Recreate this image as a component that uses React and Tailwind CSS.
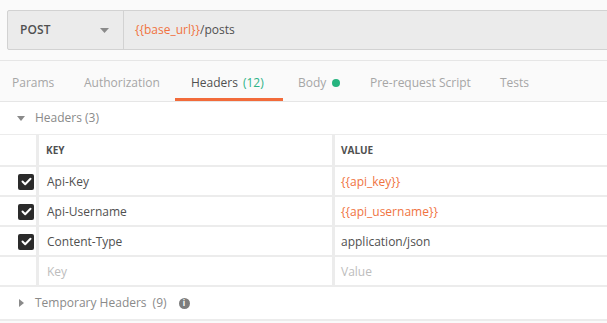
import React from "react";

const Check = () => (
  <div className="w-[16px] h-[16px] rounded-[2px] bg-[#2b2b2b] flex items-center justify-center">
    <svg width="11" height="9" viewBox="0 0 11 9" fill="none">
      <path d="M1.5 4.5 L4.2 7.2 L9.5 1.8" stroke="white" strokeWidth="2" strokeLinecap="round" strokeLinejoin="round" />
    </svg>
  </div>
);

const Row = ({ checked, k, v, kClass = "text-[#505050]", vClass = "text-[#505050]" }) => (
  <div className="flex h-[30px] border-b-2 border-[#ececec]">
    <div className="w-[36px] flex items-center justify-end pr-[2px] pt-[1px]">{checked && <Check />}</div>
    <div className={`w-[296px] border-l-[3px] border-[#ececec] flex items-center pl-[8px] pt-[1px] text-[12px] ${kClass}`}>{k}</div>
    <div className={`flex-1 border-l-[3px] border-[#ececec] flex items-center pl-[6px] pt-[1px] text-[12px] ${vClass}`}>{v}</div>
  </div>
);

export default function App() {
  return (
    <div className="w-[607px] h-[323px] overflow-hidden bg-[#fafafa]" style={{ fontFamily: "'Open Sans', sans-serif" }}>
      <div className="pt-[10px] pl-[7px]">
        <div className="flex h-[40px] w-[610px] border border-[#d2d2d2] bg-[#ebebeb] rounded-l-[2px]">
          <div className="w-[116px] flex items-center justify-between pl-[12px] pr-[14px] border-r border-[#d2d2d2]">
            <span className="text-[12px] font-semibold text-[#505050] tracking-[0.1px]">POST</span>
            <svg width="9" height="5" viewBox="0 0 9 5"><path d="M0 0 L9 0 L4.5 5 Z" fill="#8a8a8a" /></svg>
          </div>
          <div className="flex items-center pl-[11px] text-[12px]">
            <span className="text-[#f0733f]">{"{{base_url}}"}</span>
            <span className="text-[#505050]">/posts</span>
          </div>
        </div>
      </div>
      <div className="mt-[10px] border-t border-[#e6e6e6] border-b border-b-[#e6e6e6] flex h-[42px] text-[12px] text-[#a6a6a6]">
        <div className="w-[72px] pl-[12px] pt-[3px] flex items-center">Params</div>
        <div className="w-[103px] pl-[12px] pt-[3px] flex items-center">Authorization</div>
        <div className="w-[108px] pl-[16px] flex items-center border-b-[3px] border-[#f26b3a] pt-[6px] text-[#505050]">
          Headers <span className="ml-[5px] text-[#2eb387]">(12)</span>
        </div>
        <div className="w-[75px] pl-[15px] pt-[3px] flex items-center">
          Body <span className="ml-[6px] w-[8px] h-[8px] rounded-full bg-[#26b47f]"></span>
        </div>
        <div className="w-[130px] pl-[12px] pt-[3px] flex items-center">Pre-request Script</div>
        <div className="pl-[12px] pt-[3px] flex items-center">Tests</div>
      </div>
      <div className="bg-white">
        <div className="flex items-center h-[33px] border-b border-[#ececec] text-[12px] font-medium text-[#8a8a8a]">
          <svg className="ml-[17px] mr-[10px]" width="8" height="5" viewBox="0 0 8 5"><path d="M0 0 L8 0 L4 5 Z" fill="#8a8a8a" /></svg>
          <span>Headers (3)</span>
        </div>
        <div className="flex h-[32px] border-b-2 border-[#ececec]">
          <div className="w-[36px]"></div>
          <div className="w-[296px] border-l-[3px] border-[#ececec] flex items-center pl-[7px] text-[10px] font-bold text-[#505050]">KEY</div>
          <div className="flex-1 border-l-[3px] border-[#ececec] flex items-center pl-[6px] text-[10px] font-bold text-[#505050]">VALUE</div>
        </div>
        <Row checked k="Api-Key" v="{{api_key}}" vClass="text-[#f0733f]" />
        <Row checked k="Api-Username" v="{{api_username}}" vClass="text-[#f0733f]" />
        <Row checked k="Content-Type" v="application/json" />
        <Row k="Key" v="Value" kClass="text-[#bdbdbd]" vClass="text-[#bdbdbd]" />
        <div className="flex items-center h-[34px] border-b-2 border-[#ececec] text-[12px] font-medium text-[#8a8a8a]">
          <svg className="ml-[19px] mr-[11px]" width="5" height="8" viewBox="0 0 5 8"><path d="M0 0 L5 4 L0 8 Z" fill="#8a8a8a" /></svg>
          <span>Temporary Headers</span>
          <span className="ml-[6px]">(9)</span>
          <span className="ml-[12px] w-[11px] h-[11px] rounded-full bg-[#7d7d7d] flex items-center justify-center text-white text-[8px] font-bold leading-none">i</span>
        </div>
      </div>
    </div>
  );
}
